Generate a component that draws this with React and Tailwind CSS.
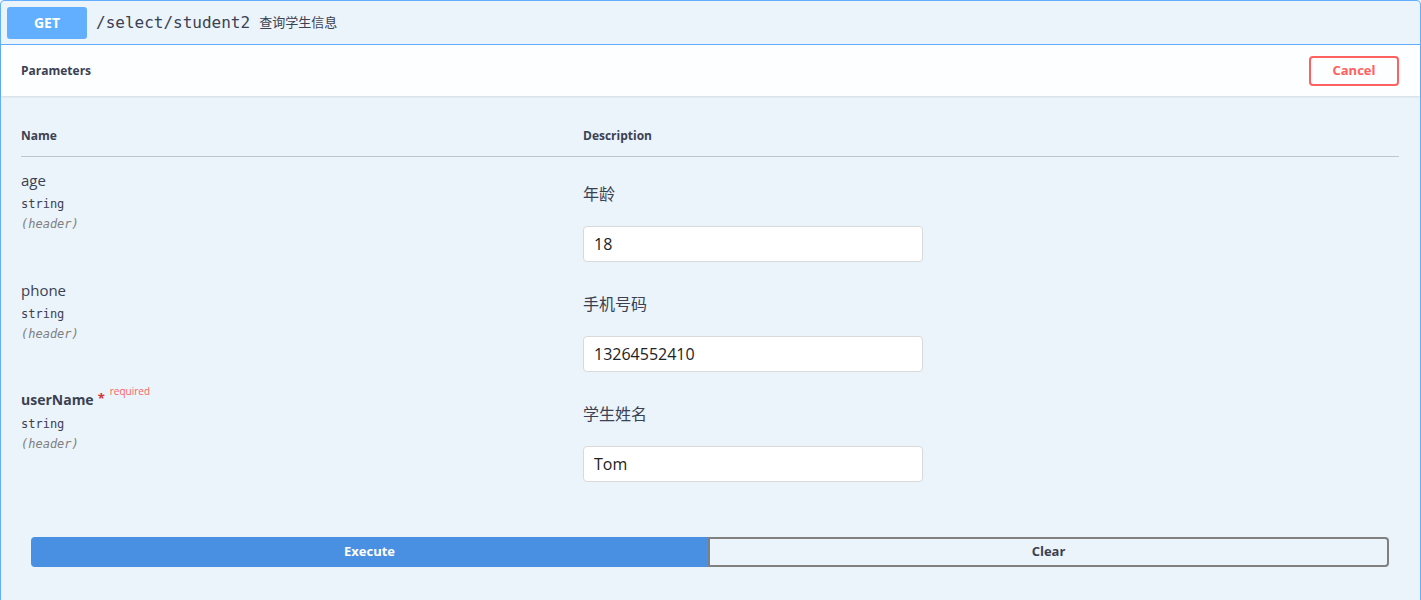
import React from "react";

const params = [
  { name: "age", desc: "年龄", value: "18" },
  { name: "phone", desc: "手机号码", value: "13264552410" },
  { name: "userName", desc: "学生姓名", value: "Tom", required: true },
];

const sans = { fontFamily: '"Open Sans", "Noto Sans CJK SC", sans-serif' };
const mono = { fontFamily: '"DejaVu Sans Mono", monospace' };

export default function App() {
  return (
    <div className="bg-white min-h-[600px]" style={sans}>
      <div className="border border-[#61affe] rounded-t-[4px] bg-[#ebf3fb] text-[#3b4151] pb-[40px]">
        {/* summary */}
        <div className="flex items-center h-[44px] px-[6px] border-b border-[#61affe]">
          <div className="w-[80px] h-[32px] rounded-[3px] bg-[#61affe] text-white text-[14px] font-bold flex items-center justify-center">
            GET
          </div>
          <span className="ml-[9px] text-[16px] text-[#3b4151]" style={mono}>
            /select/student2
          </span>
          <span className="ml-[9px] text-[13px] text-[#3b4151]">查询学生信息</span>
        </div>

        {/* parameters header */}
        <div className="h-[51px] bg-white/90 shadow-[0_1px_2px_rgba(0,0,0,0.1)] flex items-center justify-between pl-[20px] pr-[21px]">
          <span className="text-[12px] font-bold text-[#3b4151]">Parameters</span>
          <button className="w-[90px] h-[30px] border-2 border-[#ff6060] rounded-[4px] text-[#ff6060] text-[13px] font-bold bg-transparent">
            Cancel
          </button>
        </div>

        {/* table */}
        <div className="pl-[20px] pr-[21px]">
          <div className="flex items-end h-[61px] pb-[11px] border-b border-[#3b4151]/25 text-[12px] font-bold">
            <div className="w-[562px]">Name</div>
            <div>Description</div>
          </div>
          {params.map((p) => (
            <div key={p.name} className="flex h-[110px] pt-[13px]">
              <div className="w-[562px] flex flex-col">
                <div className="flex items-start h-[20px]">
                  <span className={p.required ? "text-[14px] font-bold leading-[20px]" : "text-[15px] leading-[20px]"}>{p.name}</span>
                  {p.required && (
                    <>
                      <span className="text-[#cc3333] text-[13px] ml-[4px] leading-[16px] font-bold">*</span>
                      <span className="text-[#ff6060] text-[10px] ml-[5px] -mt-[6px]">required</span>
                    </>
                  )}
                </div>
                <span className="text-[12px] mt-[7px] leading-[14px]" style={mono}>
                  string
                </span>
                <span className="text-[12px] italic text-[#808080] mt-[6px] leading-[14px]" style={mono}>
                  (header)
                </span>
              </div>
              <div className="flex flex-col">
                <span className="text-[16px] mt-[14px] leading-[20px]">{p.desc}</span>
                <input
                  readOnly
                  value={p.value}
                  className="mt-[22px] w-[340px] h-[36px] bg-white border border-[#d9d9d9] rounded-[4px] px-[10px] text-[16px] text-[#222] outline-none"
                />
              </div>
            </div>
          ))}
        </div>

        {/* buttons */}
        <div className="flex mt-[50px] ml-[30px] mr-[31px] h-[30px]">
          <button className="flex-1 bg-[#4990e2] text-white text-[13px] font-bold rounded-l-[4px]">Execute</button>
          <button className="flex-1 border-2 border-[#808080] text-[#3b4151] text-[13px] font-bold rounded-r-[4px] bg-transparent">Clear</button>
        </div>
      </div>
    </div>
  );
}
